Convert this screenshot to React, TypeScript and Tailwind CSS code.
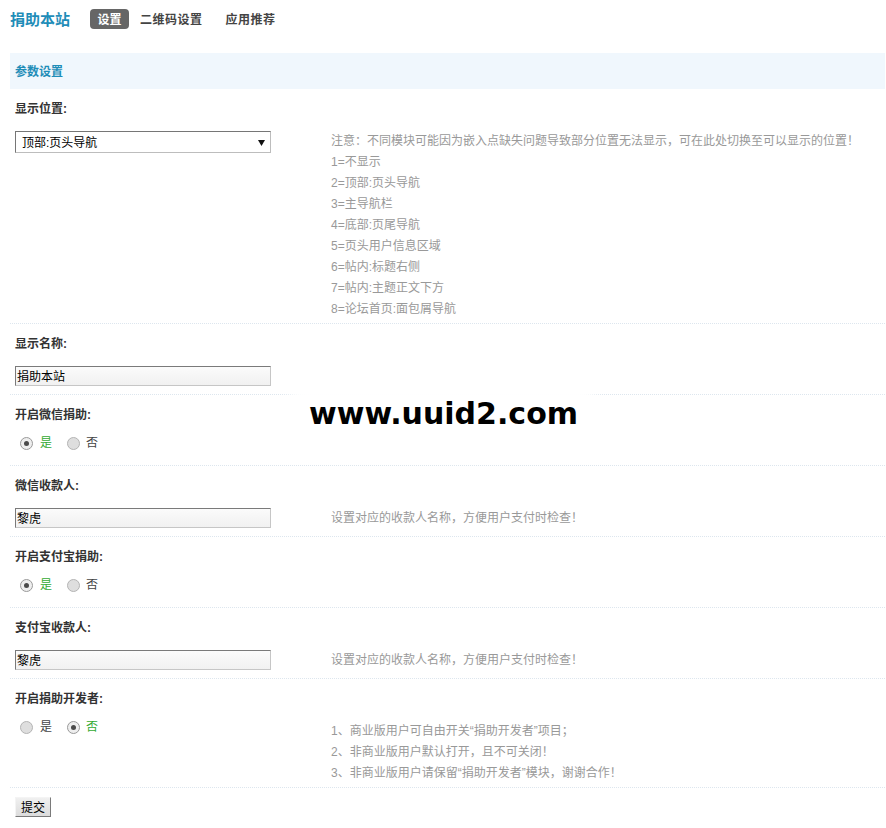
import type { ReactNode } from "react";

const notes = [
  "注意：不同模块可能因为嵌入点缺失问题导致部分位置无法显示，可在此处切换至可以显示的位置！",
  "1=不显示",
  "2=顶部:页头导航",
  "3=主导航栏",
  "4=底部:页尾导航",
  "5=页头用户信息区域",
  "6=帖内:标题右侧",
  "7=帖内:主题正文下方",
  "8=论坛首页:面包屑导航",
];

const devNotes = [
  "1、商业版用户可自由开关“捐助开发者”项目；",
  "2、非商业版用户默认打开，且不可关闭！",
  "3、非商业版用户请保留“捐助开发者”模块，谢谢合作！",
];

const tipPay = ["设置对应的收款人名称，方便用户支付时检查！"];

function Radio({ checked }: { checked: boolean }) {
  return (
    <span
      className={`flex h-[13px] w-[13px] flex-none items-center justify-center rounded-full border ${
        checked ? "border-[#9a9a9a] bg-[#eeeeee]" : "border-[#b4b4b4] bg-[#dedede]"
      }`}
    >
      {checked ? <span className="h-[5px] w-[5px] rounded-full bg-[#4a4a4a]" /> : null}
    </span>
  );
}

function YesNo({ yes }: { yes: boolean }) {
  return (
    <div className="flex h-[18px] items-center gap-[15px] pl-[5px]">
      <label className="flex items-center gap-[7px]">
        <Radio checked={yes} />
        <span className={yes ? "text-[#33aa33]" : "text-[#444]"}>是</span>
      </label>
      <label className="flex items-center gap-[6px]">
        <Radio checked={!yes} />
        <span className={!yes ? "text-[#33aa33]" : "text-[#444]"}>否</span>
      </label>
    </div>
  );
}

function TextBox({ value }: { value: string }) {
  return (
    <div className="flex h-[20px] w-[256px] items-center border border-t-[#7a7a7a] border-l-[#7a7a7a] border-r-[#c6c6c6] border-b-[#c6c6c6] bg-gradient-to-b from-[#fbfbfb] to-[#f1f1f1] pl-[1px] pt-[1px] text-black">
      {value}
    </div>
  );
}

function Row({
  label,
  control,
  tips,
  radio = false,
  first = false,
}: {
  label: string;
  control: ReactNode;
  tips?: string[];
  radio?: boolean;
  first?: boolean;
}) {
  return (
    <div className={first ? "" : "border-t border-dotted border-[#dde6ee]"}>
      <div className="flex h-[36px] items-center pl-[5px] pt-[3px] font-bold text-[#333]">{label}</div>
      <div className="flex min-h-[34px] items-start">
        <div className={`w-[316px] flex-none pl-[5px] ${radio ? "pt-[3px]" : "pt-[6px]"}`}>
          {control}
        </div>
        {tips ? (
          <div className="pb-[3px] pl-[5px] pt-[6px] leading-[21px] text-[#999]">
            {tips.map((line) => (
              <div key={line}>{line}</div>
            ))}
          </div>
        ) : null}
      </div>
    </div>
  );
}

export default function App() {
  return (
    <div className="relative min-h-[828px] w-[886px] bg-white text-[12px] leading-[18px] text-[#333] font-['Liberation_Sans','Noto_Sans_CJK_SC',sans-serif]">
      <div className="px-[10px] pt-[9px]">
        {/* title + tabs */}
        <div className="flex h-[20px] items-center">
          <span className="pt-[2px] text-[15px] font-bold text-[#1f8db8]">捐助本站</span>
          <nav className="ml-[20px] flex h-[20px] items-center gap-[11px] font-bold">
            <span className="flex h-[20px] w-[39px] items-center justify-center rounded-[4px] bg-[#666] pt-[2px] text-white">
              设置
            </span>
            <span className="pt-[2px] pr-[12px] tracking-[0.5px] text-[#444]">二维码设置</span>
            <span className="pt-[2px] tracking-[0.5px] text-[#444]">应用推荐</span>
          </nav>
        </div>

        <div className="mt-[24px] w-[875px]">
          <div className="flex h-[36px] items-center bg-[#f0f7fd] pl-[5px] pt-[2px] font-bold text-[#1f8db8]">
            参数设置
          </div>

          <Row
            first
            label="显示位置:"
            tips={notes}
            control={
              <div className="flex h-[22px] w-[256px] items-center justify-between border border-t-[#767676] border-l-[#767676] border-r-[#bdbdbd] border-b-[#bdbdbd] bg-white pl-[6px] pr-[5px] pt-[1px] text-black">
                <span>顶部:页头导航</span>
                <svg width="7" height="6" viewBox="0 0 7 6">
                  <path d="M0 0h7L3.5 6z" fill="#111" />
                </svg>
              </div>
            }
          />
          <Row label="显示名称:" control={<TextBox value="捐助本站" />} />
          <Row label="开启微信捐助:" radio control={<YesNo yes />} />
          <Row label="微信收款人:" control={<TextBox value="黎虎" />} tips={tipPay} />
          <Row label="开启支付宝捐助:" radio control={<YesNo yes />} />
          <Row label="支付宝收款人:" control={<TextBox value="黎虎" />} tips={tipPay} />
          <Row label="开启捐助开发者:" radio control={<YesNo yes={false} />} tips={devNotes} />

          <div className="border-t border-dotted border-[#dde6ee] pl-[5px] pt-[9px]">
            <button
              type="button"
              className="flex h-[20px] w-[36px] items-center justify-center border border-t-[#f4f4f4] border-l-[#f4f4f4] border-r-[#7a7a7a] border-b-[#7a7a7a] bg-gradient-to-b from-[#f0f0f0] to-[#dcdcdc] pt-[1px] text-black"
            >
              提交
            </button>
          </div>
        </div>
      </div>

      {/* watermark overlay */}
      <div className="pointer-events-none absolute left-[290px] top-[368px] h-[88px] w-[305px] rounded-[30px] bg-white/95 blur-[6px]" />
      <div className="pointer-events-none absolute left-[309px] top-[399px] text-[30px] font-bold leading-none text-black font-['DejaVu_Sans',sans-serif]">
        www.uuid2.com
      </div>
    </div>
  );
}
